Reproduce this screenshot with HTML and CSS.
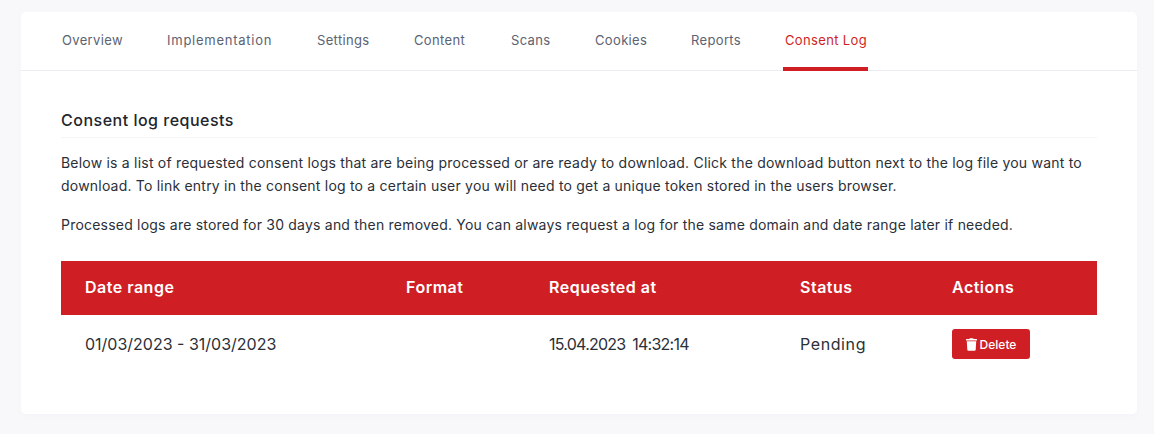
FILE: index.html
```html
<!DOCTYPE html>
<html lang="en">
<head>
    <title>Consent log requests</title>
    <meta charset="UTF-8">
    <link rel="stylesheet" href="styles.css">
</head>
<body>
<div class="card">
    <ul class="tabs">
        <li><a href="#">Overview</a></li>
        <li><a href="#" class="wide">Implementation</a></li>
        <li><a href="#">Settings</a></li>
        <li><a href="#">Content</a></li>
        <li><a href="#">Scans</a></li>
        <li><a href="#">Cookies</a></li>
        <li><a href="#">Reports</a></li>
        <li><a href="#" class="active">Consent Log</a></li>
    </ul>
    <div class="content">
        <h2 class="title">Consent log requests</h2>
        <p>Below is a list of requested consent logs that are being processed or are ready to download. Click the download button next to the log file you want to download. To link entry in the consent log to a certain user you will need to get a unique token stored in the users browser.</p>
        <p>Processed logs are stored for 30 days and then removed. You can always request a log for the same domain and date range later if needed.</p>
        <table class="logs">
            <colgroup>
                <col class="col-range">
                <col class="col-format">
                <col class="col-requested">
                <col class="col-status">
                <col>
            </colgroup>
            <thead>
                <tr>
                    <th>Date range</th>
                    <th>Format</th>
                    <th>Requested at</th>
                    <th>Status</th>
                    <th>Actions</th>
                </tr>
            </thead>
            <tbody>
                <tr>
                    <td>01/03/2023 - 31/03/2023</td>
                    <td></td>
                    <td class="stamp">15.04.2023 14:32:14</td>
                    <td class="status">Pending</td>
                    <td>
                        <button class="delete" type="button">
                            <svg class="trash" viewBox="0 0 448 512" aria-hidden="true"><path d="M432 32H312l-9.400-18.700A24 24 0 0 0 281.100 0H166.800a23.700 23.700 0 0 0-21.400 13.300L136 32H16A16 16 0 0 0 0 48v32a16 16 0 0 0 16 16h416a16 16 0 0 0 16-16V48a16 16 0 0 0-16-16zM53.200 467a48 48 0 0 0 47.900 45h245.800a48 48 0 0 0 47.900-45L416 128H32z"/></svg>
                            Delete
                        </button>
                    </td>
                </tr>
            </tbody>
        </table>
    </div>
</div>
</body>
</html>
```

FILE: styles.css
```css
* {
    box-sizing: border-box;
}

body {
    margin: 0;
    padding: 12px 17px 20px 21px;
    background-color: #f8f8fb;
    font-family: "Inter", "Liberation Sans", sans-serif;
    color: #2b2f38;
}

.card {
    height: 402px;
    background-color: #fff;
    border-radius: 5px;
    box-shadow: 0 2px 10px rgba(40, 40, 80, 0.02);
}

.tabs {
    display: grid;
    grid-template-columns: 65px 110px 57px 57px 44px 56px 54px 85px;
    gap: 40px;
    height: 59px;
    margin: 0;
    padding: 0 0 0 39px;
    list-style: none;
    border-bottom: 1px solid #ebebf2;
}

.tabs a {
    display: block;
    height: 59px;
    padding: 19px 0 0 2px;
    font-size: 13px;
    line-height: 18px;
    letter-spacing: 0.35px;
    color: #5b6272;
    text-decoration: none;
}

.tabs a.wide {
    letter-spacing: 0.75px;
}

.tabs a.active {
    color: #cf1f25;
    border-bottom: 4px solid #cf1f25;
}

.content {
    padding: 37px 40px 0;
}

.title {
    margin: 0 0 13px;
    padding-bottom: 5px;
    border-bottom: 1px solid #f5f5f8;
    font-size: 16px;
    font-weight: 500;
    line-height: 24px;
    letter-spacing: 0.5px;
    color: #22252c;
}

p {
    margin: 0 0 16px;
    font-size: 14px;
    line-height: 23px;
    letter-spacing: 0.21px;
    color: #2b2f38;
}

.logs {
    width: 100%;
    margin-top: 25px;
    border-collapse: collapse;
    table-layout: fixed;
}

.col-range {
    width: 321px;
}

.col-format {
    width: 143px;
}

.col-requested {
    width: 251px;
}

.col-status {
    width: 152px;
}

.logs th {
    height: 54px;
    padding: 0 0 2px 24px;
    background-color: #cf1f25;
    color: #fff;
    font-size: 16px;
    font-weight: 600;
    letter-spacing: 0.5px;
    text-align: left;
}

.logs td {
    height: 58px;
    padding: 0 0 0 24px;
    font-size: 16px;
    color: #2b2f38;
}

.logs td.stamp {
    letter-spacing: -0.75px;
    word-spacing: 3px;
}

.logs td.status {
    letter-spacing: 0.6px;
}

.delete {
    display: flex;
    align-items: center;
    justify-content: center;
    gap: 3px;
    width: 78px;
    height: 30px;
    border: none;
    border-radius: 3px;
    background-color: #cf1f25;
    color: #fff;
    font-family: inherit;
    font-size: 12px;
    font-weight: 500;
}

.trash {
    width: 11px;
    height: 13px;
    fill: #fff;
}
```
